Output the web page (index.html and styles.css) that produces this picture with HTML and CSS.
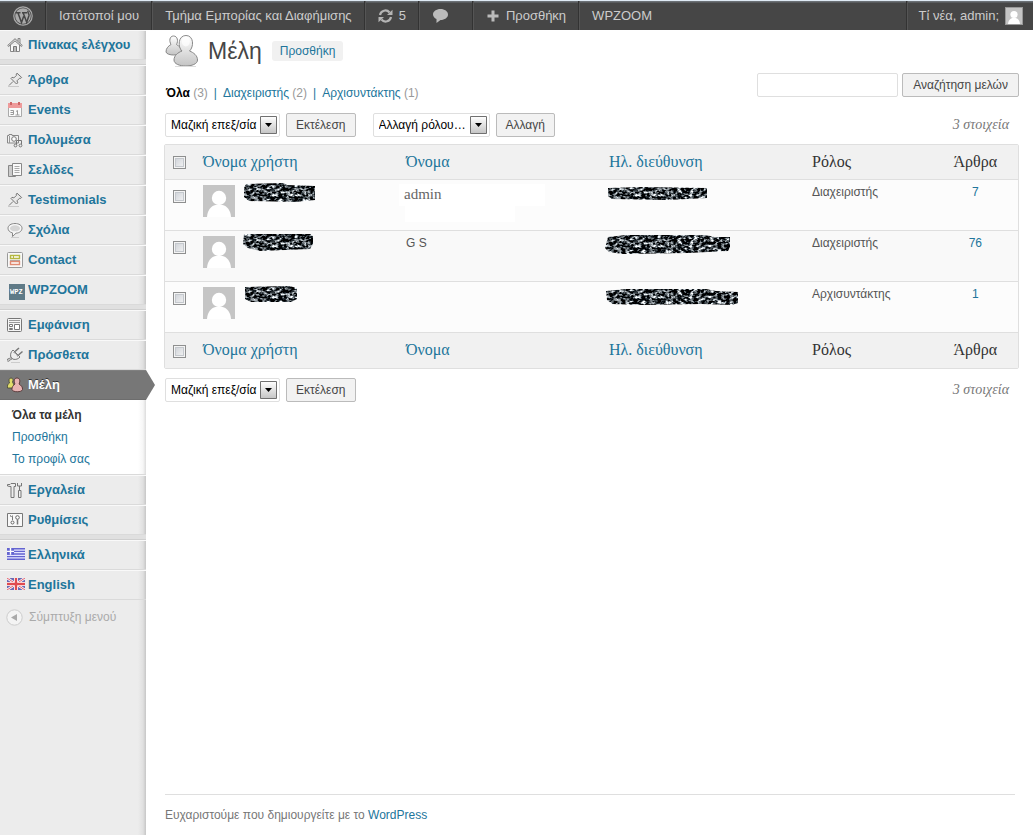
FILE: index.html
```html
<!DOCTYPE html>
<html lang="el">
<head>
<meta charset="utf-8">
<title>Μέλη</title>
<link rel="stylesheet" href="styles.css">
</head>
<body>
<svg class="defs" width="0" height="0" aria-hidden="true">
  <defs>
    <filter id="noise" x="0" y="0" width="100%" height="100%" color-interpolation-filters="sRGB">
      <feTurbulence type="fractalNoise" baseFrequency="0.25 0.36" numOctaves="3" seed="8" result="n"/>
      <feColorMatrix in="n" type="matrix" values="3 0 0 0 -1.27  3 0 0 0 -1.24  3 0 0 0 -1.22  0 0 0 0 1"/>
      <feComposite in2="SourceGraphic" operator="in"/>
    </filter>
    <linearGradient id="metal" x1="0" y1="0" x2="0" y2="1">
      <stop offset="0" stop-color="#ffffff"/><stop offset="1" stop-color="#c4c4c4"/>
    </linearGradient>
    <symbol id="pin" viewBox="0 0 16 16">
      <path d="M1 14.500h11" stroke="#c9c9c9"/>
      <path d="M2 13.500 6 9.500M4 6.500l5.500 5.500 1.200-1.200-.7-2 2.600-2.600 1.300.1.800-.8L10 1.200l-.8.8.2 1.400-2.500 2.500-1.900-.6z" fill="#e8e8e8" stroke="#777" stroke-linejoin="round"/>
    </symbol>
    <symbol id="person" viewBox="0 0 32 32">
      <path fill="#c5c5c5" d="M0 0h32v32H0z"/>
      <circle cx="16" cy="13" r="7.200" fill="#fff"/>
      <path d="M4 32c.5-7 4-11 8.500-12h7c4.500 1 8 5 8.500 12z" fill="#fff"/>
    </symbol>
  </defs>
</svg>

<header class="bar">
  <nav class="bar-group" aria-label="Γραμμή εργαλείων">
    <a class="bar-item" href="#" aria-label="WordPress">
      <svg width="20" height="20" viewBox="0 0 20 20"><circle cx="10" cy="10" r="9.200" fill="none" stroke="#aaa" stroke-width="1.200"/><circle cx="10" cy="10" r="7.800" fill="#aaa"/><path d="M2.800 6.700h4.700M9 6.700h5M5 7l3.500 9.500 2.200-6.300M10.200 7l3.500 9.200L16 9.500c.4-1.800-1.800-2.600-1-4.700" fill="none" stroke="#464646" stroke-width="1.500"/></svg>
    </a>
    <a class="bar-item" href="#">Ιστότοποί μου</a>
    <a class="bar-item" href="#">Τμήμα Εμπορίας και Διαφήμισης</a>
    <a class="bar-item" href="#">
      <svg width="15" height="14" viewBox="0 0 15 14"><path d="M2 6A5.400 5.400 0 0 1 11.500 3.500M13 8A5.400 5.400 0 0 1 3.500 10.500" fill="none" stroke="#b4b4b4" stroke-width="2.200"/><path d="M9 6h5.500V.8zM6 8H.5v5.200z" fill="#b4b4b4"/></svg>
      5</a>
    <a class="bar-item bar-comments" href="#" aria-label="Σχόλια">
      <svg width="15" height="14" viewBox="0 0 15 14"><path d="M7.500 0C11.700 0 15 2.400 15 5.500S11.700 11 7.500 11L3.500 14V10C1.300 9 0 7.400 0 5.500 0 2.400 3.300 0 7.500 0z" fill="#bbb"/></svg>
    </a>
    <a class="bar-item bar-new" href="#">
      <svg width="12" height="12" viewBox="0 0 12 12"><path d="M6 .5v11M.5 6h11" stroke="#bbb" stroke-width="3"/></svg>
      Προσθήκη</a>
    <a class="bar-item" href="#">WPZOOM</a>
  </nav>
  <a class="bar-item bar-account" href="#">Τί νέα, admin;
    <svg class="bar-avatar" width="18" height="18"><use href="#person"/></svg>
  </a>
</header>

<div class="layout">
  <nav class="menu" aria-label="Μενού">
    <a class="menu-item" href="#"><svg class="menu-icon" viewBox="0 0 16 16"><path d="M3.500 8v6.500h9V8" fill="#f8f8f8" stroke="#888"/><path d="M11 4V1.500h2V6" fill="#ddd" stroke="#888"/><path d="M.7 8.500 8 1.700l7.300 6.800-1 .9L8 3.800 1.700 9.400z" fill="#eee" stroke="#777"/><path d="M6.500 14.500v-5h3v5" fill="#bbb" stroke="#777"/></svg>Πίνακας ελέγχου</a>
    <div class="menu-sep"></div>
    <a class="menu-item" href="#"><svg class="menu-icon"><use href="#pin"/></svg>Άρθρα</a>
    <a class="menu-item" href="#"><svg class="menu-icon" viewBox="0 0 16 16"><path d="M1.500 2.500h13v12h-13z" fill="#fafafa" stroke="#aaa"/><path d="M1 1h14v5H1z" fill="#ee9a9a"/><path d="M4 0v3M12 0v3" stroke="#c66" stroke-width="2"/><path d="M3.500 8.500h3v4h-3m0-2h3M9 9.500l1.500-1v4.500m-2 0h4" fill="none" stroke="#999"/></svg>Events</a>
    <a class="menu-item" href="#"><svg class="menu-icon" viewBox="0 0 16 16"><path d="M.5 3.500H2v-1h3v1h6.500V11h-11z" fill="#f2f2f2" stroke="#888"/><path d="M2.500 4v7" stroke="#999"/><circle cx="7" cy="7" r="2.300" fill="#fff" stroke="#777"/><path d="M9.500 13V8.500h5V13" fill="none" stroke="#777"/><circle cx="8.500" cy="13.500" r="1.400" fill="#eee" stroke="#777"/><circle cx="13.500" cy="13.500" r="1.400" fill="#eee" stroke="#777"/></svg>Πολυμέσα</a>
    <a class="menu-item" href="#"><svg class="menu-icon" viewBox="0 0 16 16"><path d="M1.500 3.500h7v11h-7z" fill="#ccc" stroke="#888"/><path d="M5.500 1.500h9v12h-9z" fill="#fafafa" stroke="#888"/><path d="M7.500 4.500h5m-5 2h5m-5 2h5m-5 2h5" stroke="#aaa"/></svg>Σελίδες</a>
    <a class="menu-item" href="#"><svg class="menu-icon"><use href="#pin"/></svg>Testimonials</a>
    <a class="menu-item" href="#"><svg class="menu-icon" viewBox="0 0 16 16"><path d="M4 15.500h8" stroke="#ccc"/><path d="M8 1.500c4 0 7 1.900 7 4.700S12.500 11 9 11.200L5.500 14.500v-3.600C2.800 10.300 1 8.500 1 6.200c0-2.800 3-4.700 7-4.700z" fill="#f6f6f6" stroke="#888"/><ellipse cx="8" cy="6.300" rx="5" ry="3" fill="#d5d5d5"/></svg>Σχόλια</a>
    <a class="menu-item" href="#"><svg class="menu-icon" viewBox="0 0 16 16"><rect x=".5" y=".5" width="15" height="15" rx="1" fill="#f8f8f8" stroke="#999"/><path d="M3.500 3.500h9v3h-9z" fill="#fff" stroke="#b5b840" stroke-width="1.400"/><path d="M6.500 3.500v3" stroke="#b5b840"/><path d="M3 8h10v1H3z" fill="#aaa"/><path d="M3.500 9.500h9v3h-9z" fill="#fff" stroke="#e08a72" stroke-width="1.400"/></svg>Contact</a>
    <a class="menu-item" href="#"><svg class="menu-icon menu-icon-wpz" viewBox="0 0 16 16"><path fill="#5f7a87" d="M0 0h16v16H0z"/><text class="wpz" x="1" y="10">WPZ</text></svg>WPZOOM</a>
    <div class="menu-sep"></div>
    <a class="menu-item" href="#"><svg class="menu-icon" viewBox="0 0 16 16"><rect x=".5" y="1.500" width="14" height="13" rx="1" fill="#f5f5f5" stroke="#777"/><path d="M2 3.500h11M2 5.500h11" stroke="#999"/><path d="M2.500 7.500h3v2h-3zM2.500 11.500h3v1h-3zM7.500 7.500h5v5h-5z" fill="#fff" stroke="#777"/></svg>Εμφάνιση</a>
    <a class="menu-item" href="#"><svg class="menu-icon" viewBox="0 0 16 16"><path d="M4 15.500h9" stroke="#ccc"/><path d="M.7 14.500C1 11.500 3 13 4.500 11" fill="none" stroke="#777" stroke-width="2.600"/><path d="M.7 14.500C1 11.500 3 13 4.500 11" fill="none" stroke="#eee"/><path d="M8 4.500l4-3.500M11.500 8l4-3.500" stroke="#777" stroke-width="1.500"/><path d="M6 3l7 7c-1.500 1.800-4 3-7 2.200L3.800 10C3 7 4.300 4.500 6 3z" fill="#eee" stroke="#777"/><path d="M6.500 5.500c2 0 4 2 4 4" fill="none" stroke="#888"/></svg>Πρόσθετα</a>
    <a class="menu-item menu-current" href="#" aria-current="page"><svg class="menu-icon" viewBox="0 0 16 16"><path d="M4 1c2 0 2.500 2 1.500 4L7 8v3H.5C0 8 1 7 2.500 6 1.500 3.500 2 1 4 1z" fill="#e0dc6c" stroke="#443" stroke-width=".8"/><path d="M10 1c3 0 3.500 3.500 2 6 2 1.200 4 3.500 3.500 5.500-.5 3-10 3-10.500 0-.3-2 1-4.200 3-5.500-1.500-2.500-1-6 2-6z" fill="#e8b4b4" stroke="#533" stroke-width=".9"/></svg>Μέλη</a>
    <div class="submenu">
      <a class="submenu-item submenu-current" href="#">Όλα τα μέλη</a>
      <a class="submenu-item" href="#">Προσθήκη</a>
      <a class="submenu-item" href="#">Το προφίλ σας</a>
    </div>
    <a class="menu-item" href="#"><svg class="menu-icon" viewBox="0 0 16 16"><path d="M.5 2.500H3l1-1h4.500v3H7v11H4v-11H3L.5 4z" fill="#eee" stroke="#777"/><path d="M10.500 1v3h4V1M12.500 4v5" fill="none" stroke="#777"/><path d="M11.500 8.500h2.500v7h-2.500z" fill="#eee" stroke="#777"/></svg>Εργαλεία</a>
    <a class="menu-item" href="#"><svg class="menu-icon" viewBox="0 0 16 16"><path d="M.5 1.500h15v13H.5z" fill="#f8f8f8" stroke="#777"/><path d="M5.500 3.500V8" stroke="#777"/><path d="M3.500 3v1.500h2" fill="none" stroke="#999"/><circle cx="5.500" cy="10.500" r="1.500" fill="#fff" stroke="#666"/><circle cx="10.500" cy="5.500" r="1.800" fill="#fff" stroke="#666"/><path d="M10.500 7.500v5" stroke="#777" stroke-width="1.500"/></svg>Ρυθμίσεις</a>
    <div class="menu-sep"></div>
    <a class="menu-item menu-flag" href="#"><svg class="flag" viewBox="0 0 18 12"><path fill="#e4e4ff" d="M0 0h18v12H0z"/><path d="M0 .7h18M0 3.350h18M0 6h18M0 8.650h18M0 11.300h18" stroke="#6464d0" stroke-width="1.400"/><path fill="#6464d0" d="M0 0h7v6.700H0z"/><path d="M3.500 0v6.700M0 3.400h7" stroke="#fff" stroke-width="1.400"/></svg>Ελληνικά</a>
    <a class="menu-item menu-flag" href="#"><svg class="flag" viewBox="0 0 18 12"><path fill="#6a68b4" d="M0 0h18v12H0z"/><path d="M0 0l18 12M18 0 0 12" stroke="#fff" stroke-width="2.400"/><path d="M0 0l18 12M18 0 0 12" stroke="#e04a55" stroke-width=".9"/><path d="M9 0v12M0 6h18" stroke="#fff" stroke-width="4"/><path d="M9 0v12M0 6h18" stroke="#e04a4f" stroke-width="2.400"/></svg>English</a>
    <button class="collapse" type="button"><svg width="17" height="17" viewBox="0 0 17 17"><circle cx="8.500" cy="8.500" r="7.700" fill="#f4f4f4" stroke="#ccc"/><path d="M11 5v7L5 8.500z" fill="#aaa"/></svg>Σύμπτυξη μενού</button>
  </nav>

  <div class="content">
    <main class="main">
      <div class="title-row">
        <svg class="title-icon" viewBox="0 0 34 34">
          <g fill="url(#metal)" stroke="#888"><path d="M1 18c0-4 2.500-6 5-7.500C4 7 4.500 2 8.500 2s5 5 3 8.500c2.500 1.500 5 3.500 5 7.500-1 4-14.500 4-15.500 0z"/>
          <path d="M9 26c0-4.500 4-7.500 8-9-4.500-4-4-15.500 4-15.500S29 13 24.500 17c4 1.500 8 4.500 8 9 0 8-23.500 8-23.500 0z"/></g>
          <ellipse cx="20.800" cy="7.500" rx="4" ry="5" fill="#fff" opacity=".7"/><path d="M10 32.500h21" stroke="#ddd"/>
        </svg>
        <h1 class="title">Μέλη</h1>
        <a class="add-new" href="#">Προσθήκη</a>
      </div>

      <div class="filter-row">
        <nav class="filters" aria-label="Φίλτρα">
          <a class="filter-current" href="#">Όλα</a> <span class="count">(3)</span><span class="bar-sep">|</span><a href="#">Διαχειριστής</a> <span class="count">(2)</span><span class="bar-sep">|</span><a href="#">Αρχισυντάκτης</a> <span class="count">(1)</span>
        </nav>
        <form class="search">
          <input class="search-input" type="search" aria-label="Αναζήτηση μελών">
          <button class="button" type="button">Αναζήτηση μελών</button>
        </form>
      </div>

      <div class="tools">
        <div class="tool-group">
          <span class="select-box"><select class="select" aria-label="Μαζική επεξεργασία"><option>Μαζική επεξ/σία</option></select><svg class="select-arrow" viewBox="0 0 17 18" aria-hidden="true"><path d="M.5.5h16v17H.5z" fill="url(#metal)" stroke="#707070"/><path d="M5 7h7l-3.500 4z" fill="#000"/></svg></span>
          <button class="button" type="button">Εκτέλεση</button>
        </div>
        <div class="tool-group">
          <span class="select-box"><select class="select" aria-label="Αλλαγή ρόλου"><option>Αλλαγή ρόλου…</option></select><svg class="select-arrow" viewBox="0 0 17 18" aria-hidden="true"><path d="M.5.5h16v17H.5z" fill="url(#metal)" stroke="#707070"/><path d="M5 7h7l-3.500 4z" fill="#000"/></svg></span>
          <button class="button" type="button">Αλλαγή</button>
        </div>
        <span class="total">3 στοιχεία</span>
      </div>

      <table class="users">
        <colgroup><col class="col-check"><col class="col-wide"><col class="col-wide"><col class="col-wide"><col class="col-role"><col class="col-posts"></colgroup>
        <thead>
          <tr><th><input class="check" type="checkbox" aria-label="Επιλογή όλων"></th><th><a href="#">Όνομα χρήστη</a></th><th><a href="#">Όνομα</a></th><th><a href="#">Ηλ. διεύθυνση</a></th><th>Ρόλος</th><th class="num">Άρθρα</th></tr>
        </thead>
        <tbody>
          <tr>
            <td><input class="check" type="checkbox" aria-label="Επιλογή μέλους 1"></td>
            <td><div class="user"><svg class="avatar"><use href="#person"/></svg><svg class="scribble" width="74" height="20"><path filter="url(#noise)" d="M3 1 40 0l4 2 28 1v14l-20 2-46-1-5-4V5z"/></svg></div></td>
            <td class="patched"><span class="typed-name">admin</span></td>
            <td><svg class="scribble scribble-mail" width="130" height="20"><path filter="url(#noise)" d="M2 5 36 4l65 1v10l-40 2-55-1-4-3z"/></svg></td>
            <td>Διαχειριστής</td><td class="num"><a href="#">7</a></td>
          </tr>
          <tr class="alt">
            <td><input class="check" type="checkbox" aria-label="Επιλογή μέλους 2"></td>
            <td><div class="user"><svg class="avatar"><use href="#person"/></svg><svg class="scribble" width="74" height="20"><path filter="url(#noise)" d="M1 0 66-1l4 3v8l-3 5-50 2-12-3-5-4z"/></svg></div></td>
            <td>G S</td>
            <td><svg class="scribble scribble-mail" width="130" height="22"><path filter="url(#noise)" d="M2 3 20 1h80l8 2h16v10l-2 4-40 2-65 1-14-2-4-4z"/></svg></td>
            <td>Διαχειριστής</td><td class="num"><a href="#">76</a></td>
          </tr>
          <tr>
            <td><input class="check" type="checkbox" aria-label="Επιλογή μέλους 3"></td>
            <td><div class="user"><svg class="avatar"><use href="#person"/></svg><svg class="scribble" width="74" height="20"><path filter="url(#noise)" d="M2 2 46 1l8 2v11l-6 3H8l-6-3z"/></svg></div></td>
            <td></td>
            <td><svg class="scribble scribble-mail" width="134" height="22"><path filter="url(#noise)" d="M0 6 20 4h80l10 2 22 1v11l-6 2-30-1-60 1-30-1-5-4z"/></svg></td>
            <td>Αρχισυντάκτης</td><td class="num"><a href="#">1</a></td>
          </tr>
        </tbody>
        <tfoot>
          <tr><th><input class="check" type="checkbox" aria-label="Επιλογή όλων"></th><th><a href="#">Όνομα χρήστη</a></th><th><a href="#">Όνομα</a></th><th><a href="#">Ηλ. διεύθυνση</a></th><th>Ρόλος</th><th class="num">Άρθρα</th></tr>
        </tfoot>
      </table>

      <div class="tools">
        <div class="tool-group">
          <span class="select-box"><select class="select" aria-label="Μαζική επεξεργασία"><option>Μαζική επεξ/σία</option></select><svg class="select-arrow" viewBox="0 0 17 18" aria-hidden="true"><path d="M.5.5h16v17H.5z" fill="url(#metal)" stroke="#707070"/><path d="M5 7h7l-3.500 4z" fill="#000"/></svg></span>
          <button class="button" type="button">Εκτέλεση</button>
        </div>
        <span class="total">3 στοιχεία</span>
      </div>
    </main>
    <footer class="footer">Ευχαριστούμε που δημιουργείτε με το <a href="#">WordPress</a></footer>
  </div>
</div>
</body>
</html>
```

FILE: styles.css
```css
* { box-sizing: border-box; }

body {
  margin: 0;
  min-height: 100vh;
  display: flex;
  flex-direction: column;
  background: #fff;
  color: #555;
  font: 12px/18px "Liberation Sans", Arial, sans-serif;
}

a { color: #21759b; text-decoration: none; }
button, input, select { font: inherit; }
.defs { position: absolute; }

/* Top bar */
.bar {
  display: flex;
  justify-content: space-between;
  height: 30px;
  border-top: 1px solid #dfeaf4;
  background: linear-gradient(#6b7075 1px, #464646 2px);
}
.bar-group { display: flex; }
.bar-item {
  display: flex;
  align-items: center;
  gap: 6px;
  padding: 0 12px 0 13px;
  border-right: 1px solid #333;
  box-shadow: 1px 0 #555;
  color: #ccc;
  font-size: 13px;
}
.bar-item:last-child { border-right: 0; box-shadow: none; }
.bar-comments { padding: 0 24px 0 14px; }
.bar-new { padding-left: 14px; gap: 7px; }
.bar-item.bar-account { padding-right: 10px; box-shadow: inset 1px 0 #333, inset 2px 0 #555; }
.bar-avatar { border: 1px solid #999; }

.layout { flex: 1; display: flex; }

/* Side menu */
.menu {
  width: 146px;
  flex: none;
  background: linear-gradient(to left, #c6c6c6, #e0e0e0 3px, #ececec 8px);
}
.menu-item {
  display: flex;
  gap: 5px;
  height: 30px;
  padding: 5px 0 0 7px;
  border-top: 1px solid #f9f9f9;
  border-bottom: 1px solid #dadada;
  color: #21759b;
  font-size: 13px;
  font-weight: bold;
  line-height: 18px;
}
.menu-icon { width: 16px; height: 16px; flex: none; margin-top: 1px; fill: none; }
.menu-icon-wpz { margin: 3px -2px 0 2px; }
.wpz { fill: #fff; font: bold 7px "Liberation Sans Narrow", "Liberation Mono", monospace; }
.menu-flag { gap: 3px; }
.flag { width: 18px; height: 12px; flex: none; margin-top: 2px; }
.menu-sep { height: 5px; background: #e0e0e0; border-bottom: 1px solid #cfcfcf; }
.menu-current {
  position: relative;
  background: #777;
  border-color: #808080 #777 #6d6d6d;
  color: #fff;
  text-shadow: 0 -1px #333;
}
.menu-current::after {
  content: "";
  position: absolute;
  left: 100%;
  top: -1px;
  width: 9px;
  height: 30px;
  background: #777;
  clip-path: polygon(0 0, 100% 50%, 0 100%);
}
.submenu {
  height: 75px;
  padding: 4px 12px;
  border-bottom: 1px solid #dadada;
  background: linear-gradient(to left, #dcdcdc, #f6f6f6 3px, #fff 8px);
}
.submenu-item { display: block; line-height: 22px; }
.submenu-current { color: #333; font-weight: bold; }
.collapse {
  display: flex;
  align-items: center;
  gap: 6px;
  margin: 0;
  padding: 8px 6px;
  border: 0;
  background: none;
  color: #aaa;
}

/* Content */
.content { flex: 1; min-width: 0; display: flex; flex-direction: column; padding: 0 14px 0 18px; }
.main { flex: 1; }
.title-row { display: flex; align-items: center; height: 42px; padding-left: 1px; }
.title-icon { width: 34px; height: 34px; }
.title {
  margin: 0 10px 0 9px;
  color: #464646;
  font-size: 23px;
  font-weight: normal;
  line-height: 30px;
}
.add-new { padding: 1px 8px; border-radius: 3px; background: #f1f1f1; }

.filter-row { display: flex; justify-content: space-between; height: 32px; padding-left: 2px; }
.filters { padding-top: 12px; }
.filter-current { color: #000; font-weight: bold; }
.count { color: #999; }
.bar-sep { margin: 0 6px; color: #21759b; }
.search { display: flex; gap: 4px; padding-top: 1px; }
.search-input {
  width: 141px;
  height: 24px;
  border: 1px solid #dfdfdf;
  border-radius: 2px;
  background: #fff;
}
.button {
  height: 24px;
  padding: 0 9px;
  border: 1px solid #bbb;
  border-radius: 2px;
  background: #f2f2f2;
  color: #464646;
}
.search .button { padding: 0 10px; }

.tools { display: flex; gap: 17px; padding: 9px 10px 7px 1px; }
.tool-group { display: flex; gap: 6px; }
.select-box { position: relative; }
.select {
  appearance: none;
  height: 24px;
  padding: 0 22px 0 5px;
  border: 1px solid #dfdfdf;
  border-radius: 2px;
  background: #fff;
  color: #000;
}
.select-arrow { position: absolute; top: 3px; right: 3px; width: 17px; height: 18px; pointer-events: none; }
.total {
  margin-left: auto;
  color: #777;
  font: italic 14px/24px "Liberation Serif", Georgia, serif;
}

/* Members table */
.users {
  width: 100%;
  table-layout: fixed;
  border-collapse: separate;
  border-spacing: 0;
  border: 1px solid #dfdfdf;
  border-radius: 2px;
}
.col-check { width: 31px; }
.col-wide { width: 203px; }
.col-posts { width: 10%; }
.users th {
  height: 35px;
  padding: 0 7px 1px;
  background: #f1f1f1;
  color: #333;
  font: 16px/20px "Liberation Serif", Georgia, serif;
  text-align: left;
}
.users td {
  height: 51px;
  padding: 3px 7px;
  border-top: 1px solid #dfdfdf;
  background-color: #fcfcfc;
  vertical-align: top;
}
.users thead th { height: 34px; }
.users tfoot th { border-top: 1px solid #dfdfdf; height: 36px; }
.users .alt td { background-color: #f9f9f9; }
.users .num { text-align: center; }
.users .patched {
  padding-left: 5px;
  background-image: linear-gradient(#fff, #fff), linear-gradient(#fff, #fff);
  background-size: 146px 22px, 110px 38px;
  background-position: 0 4px, 6px 4px;
  background-repeat: no-repeat;
}
.typed-name { color: #666; font: 15px/22px "Liberation Serif", Georgia, serif; }
.check {
  appearance: none;
  display: block;
  width: 13px;
  height: 13px;
  margin: 2px 0 0 1px;
  border: 1px solid #8e8f8f;
  background: linear-gradient(135deg, #cbcfd5, #f6f6f6);
  box-shadow: inset 0 0 0 1px #f4f4f4, inset 0 0 0 2px #c4c8cd;
}
.users td .check { margin-top: 7px; }
.user { display: flex; gap: 8px; }
.avatar { width: 32px; height: 32px; flex: none; margin-top: 2px; }
.scribble { display: block; flex: none; }
.scribble-mail { margin-left: -3px; overflow: visible; }

.footer {
  margin: 0 4px 0 1px;
  padding: 11px 0;
  border-top: 1px solid #dfdfdf;
  color: #777;
}
```
